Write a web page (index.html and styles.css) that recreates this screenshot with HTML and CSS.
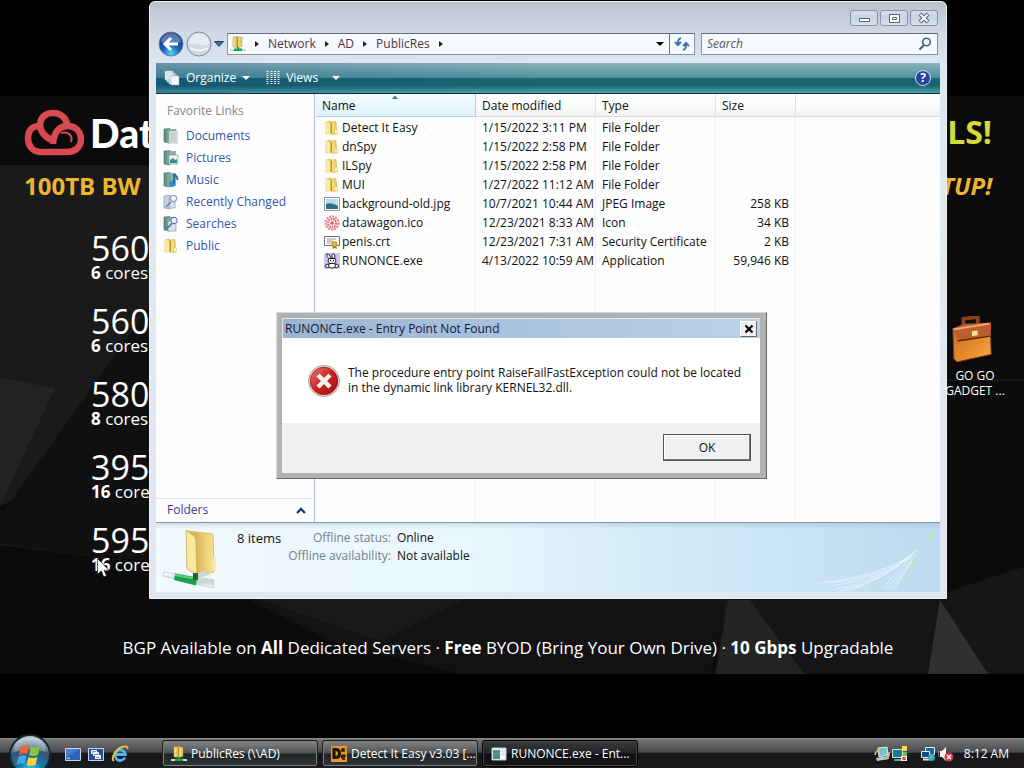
FILE: index.html
```html
<!DOCTYPE html>
<html lang="en">
<head>
<meta charset="utf-8">
<title>PublicRes</title>
<link rel="stylesheet" href="styles.css">
</head>
<body>
<svg class="defs" aria-hidden="true">
  <defs>
    <linearGradient id="gold" x1="0" x2="1"><stop offset="0" stop-color="#fbeeb0"/><stop offset=".4" stop-color="#d9bb45"/><stop offset=".55" stop-color="#f3df86"/><stop offset="1" stop-color="#dcc25a"/></linearGradient>
    <linearGradient id="goldBig" x1="0" x2="1"><stop offset="0" stop-color="#e0be5e"/><stop offset=".3" stop-color="#d5b351"/><stop offset="1" stop-color="#fbe595"/></linearGradient>
    <linearGradient id="green" x1="0" x2="1"><stop offset="0" stop-color="#4f8578"/><stop offset="1" stop-color="#8fb8aa"/></linearGradient>
    <linearGradient id="pipe" x1="0" y1="0" x2="0" y2="1"><stop offset="0" stop-color="#fff"/><stop offset=".6" stop-color="#c3d3d3"/><stop offset="1" stop-color="#f8ffff"/></linearGradient>
    <radialGradient id="blue" cx=".5" cy=".9" r=".8"><stop offset="0" stop-color="#4fd8ff"/><stop offset=".45" stop-color="#1c63bd"/><stop offset="1" stop-color="#15357e"/></radialGradient>
    <radialGradient id="orb" cx=".5" cy=".95" r=".85"><stop offset="0" stop-color="#42e0ff"/><stop offset=".4" stop-color="#1674a8"/><stop offset=".75" stop-color="#39546d"/><stop offset="1" stop-color="#a9bccb"/></radialGradient>
    <linearGradient id="red" x1="0" y1="0" x2="1" y2="1"><stop offset="0" stop-color="#ea7a76"/><stop offset=".5" stop-color="#cf2020"/><stop offset="1" stop-color="#a01010"/></linearGradient>
    <linearGradient id="leather" x1="0" y1="0" x2="1" y2="1"><stop offset="0" stop-color="#c96a2a"/><stop offset=".6" stop-color="#e88c2c"/><stop offset="1" stop-color="#f7b04a"/></linearGradient>
    <symbol id="folder" viewBox="0 0 16 16"><path d="M2 2l4-1 1 1 5-.5.6 8.500.9.4V14l-5 .5-1.500-.8L2 14z" fill="url(#gold)" stroke="#c9aa3f" stroke-width=".5"/><path d="M2 2l4 1.200v11L2 13.500z" fill="#f8eaa4"/><path d="M7.500 3v11" stroke="#b99628"/><path d="M11 10h2.500v3.500H11z" fill="#fff3b0"/></symbol>
    <symbol id="netfolder" viewBox="0 0 16 16"><path d="M3 1l4-.5 5 1v9l-4 .8L3 11z" fill="url(#gold)" stroke="#b89a35" stroke-width=".5"/><path d="M7.500 1v10" stroke="#b69120"/><path d="M0 13h16v2H0z" fill="#c6dcd6"/><path d="M4 12.500h8V15H4zM7 11h2v3H7z" fill="#16a34b"/></symbol>
    <symbol id="bookbase" viewBox="0 0 16 16"><path d="M1 1l6-.5V15l-6-1z" fill="url(#green)" stroke="#47766b" stroke-width=".6"/><path d="M7 1h6v13H7z" fill="#8caea8"/></symbol>
  </defs>
</svg>

<main class="desktop">
  <section class="wallpaper">
    <svg class="facets" viewBox="0 0 1024 578" preserveAspectRatio="none" aria-hidden="true">
      <path d="M0 0h1024v578H0z" fill="#0b0b0b"/>
      <path d="M0 70h200v250L0 410z" fill="#1a1a1a"/>
      <path d="M0 282l55 10L0 410z" fill="#232323"/>
      <path d="M150 210L0 420v30l150 15z" fill="#101010"/>
      <path d="M0 448l150 20" stroke="#1a1a1a"/>
      <path d="M240 500l90 45 130 33h250l20-78z" fill="#121212"/>
      <path d="M250 500l130 45 90-45z" fill="#191919"/>
      <path d="M725 504h220v74H715z" fill="#151515"/>
      <path d="M728 504h22l54 74h-88z" fill="#242424"/>
      <path d="M947 496l77-25v107H930z" fill="#161616"/>
      <path d="M940 504l48 74h-60z" fill="#303030"/>
      <path d="M0 70h150M945 284h79" stroke="#202020"/>
    </svg>
    <div class="promo">
      <div class="promo-left">
        <div class="brand">
          <svg class="cloud" viewBox="0 0 60 48" fill="none" stroke="#d94a50" stroke-width="6.500" aria-hidden="true"><path d="M28 31C11 24 13 4 29 4c8 0 13 5 14 11"/><path d="M15 17C7 17 4 23 4 29c0 8 5 14 12 14h27c8 0 14-5 14-13 0-8-6-13-13-13-9 0-14 6-15 18"/><path d="M37 24c8-2 12 3 10 9" stroke-width="2"/></svg>
          <span>Dat</span>
        </div>
        <p class="bw">100TB BW</p>
      </div>
      <div class="promo-right"><p class="deal">LS!</p><p class="setup">TUP!</p></div>
    </div>
    <ul class="cpus">
      <li><span class="model">560</span><span class="cores"><b>6</b> cores</span></li>
      <li><span class="model">560</span><span class="cores"><b>6</b> cores</span></li>
      <li><span class="model">580</span><span class="cores"><b>8</b> cores</span></li>
      <li><span class="model">395</span><span class="cores"><b>16</b> core</span></li>
      <li><span class="model">595</span><span class="cores"><b>16</b> core</span></li>
    </ul>
    <p class="tagline">BGP Available on <b>All</b> Dedicated Servers · <b>Free</b> BYOD (Bring Your Own Drive) · <b>10 Gbps</b> Upgradable</p>
  </section>

  <a class="shortcut" href="#">
    <svg viewBox="0 0 44 48" aria-hidden="true"><path d="M13 9V3l15-2v9" fill="none" stroke="#8c4020" stroke-width="4"/><path d="M2 13l39-6 1 33-36 8L3 44z" fill="url(#leather)" stroke="#7d3e12"/><path d="M2 13l12-5 28-1-1 14-34 5z" fill="#b95f30"/><path d="M3 14l37-6" stroke="#f0ad76" stroke-width="2"/><path d="M7 26l34-5" stroke="#5a2608" stroke-width="1.500"/><path d="M22 16l6-1v5l-6 1z" fill="#ffe08a"/></svg>
    <span>GO GO<br>GADGET ...</span>
  </a>

  <section class="explorer">
    <header class="caption">
      <button aria-label="Minimize"><svg viewBox="0 0 26 14"><path d="M8.500 7.500h10v3h-10z" fill="#fff" stroke="#56677c"/></svg></button>
      <button aria-label="Maximize"><svg viewBox="0 0 26 14"><path d="M8.500 3.500h10v8h-10z" fill="#fff" stroke="#56677c"/><path d="M11.500 6.500h4v2h-4z" fill="#fff" stroke="#56677c"/></svg></button>
      <button aria-label="Close"><svg viewBox="0 0 26 14"><path d="M9 3l8 8M17 3l-8 8" stroke="#56677c" stroke-width="4"/><path d="M9.500 3.500l7 7M16.500 3.500l-7 7" stroke="#fff" stroke-width="1.800"/></svg></button>
    </header>
    <nav class="navbar">
      <div class="travel">
        <button aria-label="Back"><svg viewBox="0 0 26 26"><circle cx="13" cy="13" r="12" fill="url(#blue)" stroke="#6c7f97"/><path d="M3 11a10 9 0 0 1 20 0q-10 3-20 0" fill="#a9c4e6" opacity=".45"/><path d="M20 13H8m5-6l-6 6 6 6" fill="none" stroke="#fff" stroke-width="3"/></svg></button>
        <button aria-label="Forward"><svg viewBox="0 0 26 26"><circle cx="13" cy="13" r="12" fill="#cfd9e4" stroke="#7e8b9a"/><path d="M2.500 13a10.500 10.500 0 0 1 21 0q-4 3-9 1t-12-1" fill="#e6ecf2"/><path d="M4 17q9 5 18 0" stroke="#f5f9fc" fill="none" stroke-width="2"/></svg></button>
        <button class="recent" aria-label="Recent pages"><svg viewBox="0 0 10 6"><path d="M.5.5h9L5 5.500z" fill="#3579a0" stroke="#1e3d5c"/></svg></button>
      </div>
      <div class="address">
        <svg class="i16" aria-hidden="true"><use href="#netfolder"/></svg>
        <i class="arrow"></i><a href="#">Network</a><i class="arrow"></i><a href="#">AD</a><i class="arrow"></i><a href="#">PublicRes</a><i class="arrow"></i>
        <button class="drop" aria-label="Previous locations"><i class="tri"></i></button>
        <button class="refresh" aria-label="Refresh"><svg viewBox="0 0 16 16" fill="none" stroke="#3d72b5" stroke-width="2"><path d="M7 2C4 3 4 5 4 8M1 6l3 3 3-3"/><path d="M9 14c3-1 3-3 3-6M9 10l3-3 3 3"/></svg></button>
      </div>
      <div class="search">
        <input type="text" placeholder="Search" aria-label="Search">
        <svg viewBox="0 0 14 14" aria-hidden="true"><circle cx="8.500" cy="5" r="3.800" fill="#f4faff" stroke="#41627f" stroke-width="1.600"/><path d="M6 8l-4.500 4.500" stroke="#41627f" stroke-width="2.200"/></svg>
      </div>
    </nav>
    <div class="toolbar">
      <button class="organize"><svg class="i16" viewBox="0 0 16 16" aria-hidden="true" fill="#f4f8fa" stroke="#9fb8c4" stroke-width=".6"><path d="M1 1h8v9H1zM3 3h8v9H3zM5 5h8v9H5z"/><path d="M7 6h8v9H7z"/></svg>Organize<i class="tri"></i></button>
      <button class="views"><svg viewBox="0 0 14 14" aria-hidden="true"><path d="M1.500 0v14M5.500 0v14M9 0v14M12.500 0v14" stroke="#e9f4f6" stroke-width="2" stroke-dasharray="1 1"/></svg>Views<i class="tri"></i></button>
      <button class="help" aria-label="Help">?</button>
    </div>
    <div class="body">
      <aside class="side">
        <h2>Favorite Links</h2>
        <a href="#"><svg class="i16" viewBox="0 0 16 16"><use href="#bookbase"/><path d="M6 3h8v12H6z" fill="#f2f6f5" stroke="#8b9b99" stroke-width=".6"/><path d="M7 5h6M7 7h6M7 9h6M7 11h6M7 13h6" stroke="#76918c" stroke-width=".7"/></svg>Documents</a>
        <a href="#"><svg class="i16" viewBox="0 0 16 16"><use href="#bookbase"/><path d="M6 5h9v9H6z" fill="#e4f4f7" stroke="#6d969e" stroke-width=".6"/><path d="M7 10l3-2 2 2 2-1v4H7z" fill="#3e8a93"/></svg>Pictures</a>
        <a href="#"><svg class="i16" viewBox="0 0 16 16"><use href="#bookbase"/><circle cx="9" cy="12" r="3" fill="#2e93d3"/><path d="M11 12V3q3 0 3.500 5" fill="none" stroke="#1b6db1" stroke-width="1.800"/></svg>Music</a>
        <a href="#"><svg class="i16" viewBox="0 0 16 16"><path d="M1 2l6-1v14l-6-1z" fill="#c6d0df" stroke="#8793aa" stroke-width=".6"/><path d="M6 5h6v9H6z" fill="#dce3ee" stroke="#7d8cab" stroke-width=".6"/><circle cx="10.500" cy="4.500" r="3.200" fill="#eef3fb" stroke="#7385ac"/><path d="M8 8l-5 5" stroke="#6779a5" stroke-width="1.500"/></svg>Recently Changed</a>
        <a href="#"><svg class="i16" viewBox="0 0 16 16"><use href="#bookbase"/><path d="M5 5h8v10H5z" fill="#d5e0ec" stroke="#76899d" stroke-width=".6"/><circle cx="11" cy="4.500" r="3.200" fill="#e6f1fb" stroke="#53729c"/><path d="M9 7.500l-5 5" stroke="#466590" stroke-width="1.500"/></svg>Searches</a>
        <a href="#"><svg class="i16"><use href="#folder"/></svg>Public</a>
        <button class="folders">Folders<svg viewBox="0 0 10 7" aria-hidden="true"><path d="M1 6l4-4 4 4" fill="none" stroke="#1d3a78" stroke-width="2.400"/></svg></button>
      </aside>
      <div class="files">
        <table>
          <colgroup><col class="c-name"><col class="c-mid"><col class="c-mid"><col class="c-size"><col></colgroup>
          <thead><tr><th class="sorted"><svg class="sort" viewBox="0 0 6 4" aria-hidden="true"><path d="M0 4l3-3.500L6 4z" fill="#50708a"/></svg>Name</th><th>Date modified</th><th>Type</th><th>Size</th><th></th></tr></thead>
          <tbody>
            <tr><td><span class="file"><svg class="i16"><use href="#folder"/></svg>Detect It Easy</span></td><td>1/15/2022 3:11 PM</td><td>File Folder</td><td></td><td></td></tr>
            <tr><td><span class="file"><svg class="i16"><use href="#folder"/></svg>dnSpy</span></td><td>1/15/2022 2:58 PM</td><td>File Folder</td><td></td><td></td></tr>
            <tr><td><span class="file"><svg class="i16"><use href="#folder"/></svg>ILSpy</span></td><td>1/15/2022 2:58 PM</td><td>File Folder</td><td></td><td></td></tr>
            <tr><td><span class="file"><svg class="i16"><use href="#folder"/></svg>MUI</span></td><td>1/27/2022 11:12 AM</td><td>File Folder</td><td></td><td></td></tr>
            <tr><td><span class="file"><svg class="i16" viewBox="0 0 16 16"><path d="M.5 1.500h15v13H.5z" fill="#fff" stroke="#8b98a0"/><path d="M2 3h12v10H2z" fill="#b9dcf0"/><path d="M2 8q6-2 12 2v3H2z" fill="#2f6f84"/></svg>background-old.jpg</span></td><td>10/7/2021 10:44 AM</td><td>JPEG Image</td><td>258 KB</td><td></td></tr>
            <tr><td><span class="file"><svg class="i16" viewBox="0 0 16 16" fill="none" stroke="#dc8f97"><circle cx="8" cy="8" r="6.500" stroke-width="2.400" stroke-dasharray="2 1"/><circle cx="8" cy="8" r="4" stroke="#d8727e" stroke-width="2.200" stroke-dasharray="1.700 .7"/><circle cx="8" cy="8" r="1.500" fill="#c94c5a"/></svg>datawagon.ico</span></td><td>12/23/2021 8:33 AM</td><td>Icon</td><td>34 KB</td><td></td></tr>
            <tr><td><span class="file"><svg class="i16" viewBox="0 0 16 16"><path d="M.5 2.500h15v9H.5z" fill="#fff" stroke="#6f6f68"/><path d="M3 5h9M3 7h6M3 9h5" stroke="#9a9a94"/><path d="M9 11l-1 4 2.500-1 2.500 1-1-4" fill="#a5801c"/><circle cx="10.500" cy="10" r="2.600" fill="#e5b832" stroke="#98751b" stroke-width=".6"/></svg>penis.crt</span></td><td>12/23/2021 7:31 AM</td><td>Security Certificate</td><td>2 KB</td><td></td></tr>
            <tr><td><span class="file"><svg class="i16" viewBox="0 0 16 16"><path d="M0 0h16v16H0z" fill="#c9c8ee"/><g fill="#fff" stroke="#111" stroke-width=".9"><path d="M5.500 6L3 3.500V.8l1.600.2 2.600 4zM8 5V1.500L9.500.5 10.800 2v3.500z"/><path d="M5 11l-3 .5-1 2 2.500 1L6 14zM11 11l3 .5 1 2-2.500 1L10 14z"/><path d="M6 9.500h4.500l1 3.500-2 2h-3l-2-2z"/><path d="M5 5.500h6l1 2.500-1.500 2.500h-5L4 8z"/></g><path d="M6.500 6.800v1.400M9.500 6.800v1.400M7.500 9h1" stroke="#111"/></svg>RUNONCE.exe</span></td><td>4/13/2022 10:59 AM</td><td>Application</td><td>59,946 KB</td><td></td></tr>
            <tr class="filler"><td></td><td></td><td></td><td></td><td></td></tr>
          </tbody>
        </table>
      </div>
    </div>
    <footer class="details">
      <svg class="bigfolder" viewBox="0 0 56 62" aria-hidden="true"><path d="M25 2l26 3 1 38-17 3-10-7z" fill="url(#goldBig)" stroke="#d9bd69"/><path d="M24 1l8 6c2 2 2 4 2 8l1 31-10-6z" fill="#f9e7a2" stroke="#c6a54c" stroke-width=".7"/><path d="M51 28l3 1v11l-3 1z" fill="#f7e7aa"/><path d="M33 45l8-3 8 3-12 4z" fill="#cdd5d6"/><path d="M2 43l50 8-1 8L1 47z" fill="url(#pipe)" stroke="#b4c3c4" stroke-width=".7"/><path d="M13 44.500l22 4-1 8-22-5.500z" fill="#18a24a"/><path d="M13 45l22 4v2l-22-4z" fill="#65d083"/><path d="M31 44h5v7h-5z" fill="#126e35"/></svg>
      <p class="count">8 items</p>
      <dl><dt>Offline status:</dt><dd>Online</dd><dt>Offline availability:</dt><dd>Not available</dd></dl>
      <svg class="swoosh" viewBox="0 0 120 66" fill="none" aria-hidden="true"><g stroke="#e6f4fc" stroke-width=".8"><path d="M-6 55q58-5 100-28M10 54q46-3 83-27M12 57q46-5 80-28M16 60q42-5 78-34M20 62q46-9 76-38M24 63q42-10 74-42M64 60l36-40M68 60l30-34M72 61l23-30M76 60l18-28"/></g><path d="M92 38l6-8M110 10l7-6" stroke="#b8eda0" stroke-width="2"/><path d="M98 27l14-16" stroke="#c9e9c4"/></svg>
    </footer>
  </section>

  <section class="dialog" role="dialog" aria-labelledby="dlg-title">
    <header><h1 id="dlg-title">RUNONCE.exe - Entry Point Not Found</h1><button class="x" aria-label="Close"><svg viewBox="0 0 10 10"><path d="M1.500 1.500l7 7M8.500 1.500l-7 7" stroke="#000" stroke-width="2.200"/></svg></button></header>
    <div class="message">
      <svg viewBox="0 0 32 32" aria-hidden="true"><circle cx="16" cy="16" r="15.500" fill="#f4eeec" stroke="#a79b98"/><circle cx="16" cy="16" r="13.800" fill="url(#red)" stroke="#8f1515" stroke-width=".8"/><path d="M10 10l12 12M22 10l-12 12" stroke="#f5f1ee" stroke-width="4.500"/></svg>
      <p>The procedure entry point RaiseFailFastException could not be located<br>in the dynamic link library KERNEL32.dll.</p>
    </div>
    <footer><button class="ok">OK</button></footer>
  </section>

  <svg class="cursor" viewBox="0 0 12 20" aria-hidden="true"><path d="M.5.5v16l3.800-3.600L6.700 19l2.800-1.200-2.500-5.600H12z" fill="#fff" stroke="#111" stroke-width=".7"/></svg>
</main>

<footer class="taskbar">
  <button class="start" aria-label="Start"><svg viewBox="0 0 42 42"><circle cx="21" cy="21" r="20" fill="url(#orb)" stroke="#16262f" stroke-width="2"/><path d="M5 18a16 15 0 0 1 32 0q-16-5-32 0" fill="#dfeaf2" opacity=".35"/><path d="M12 13q4-3 8-1l-2 8q-4-2-8 1z" fill="#f0642b"/><path d="M22 12q4 3 9 0l-2 9q-5 2-9 0z" fill="#8bc540"/><path d="M9.500 23q4-3 8-1l-2 8q-4-2-8 1z" fill="#45a9e8"/><path d="M19.500 23q4 2 9 0l-2 8q-5 2-9 0z" fill="#fcd03c"/></svg></button>
  <div class="quick">
    <a href="#" aria-label="Show desktop"><svg viewBox="0 0 16 16"><path d="M.5 2.500h15v12H.5z" fill="#2e62bd" stroke="#c7d5e6"/><path d="M1 3h14L1 11z" fill="#4c7dcc"/><path d="M2 11.500h3v1.500H2z" fill="#a9d2ad"/></svg></a>
    <a href="#" aria-label="Switch windows"><svg viewBox="0 0 16 16"><path d="M.5 2.500h15v12H.5z" fill="#244f93" stroke="#c7d5e6"/><path d="M3.500 4.500h5v3h-5zM5.500 6.500h5v3h-5z" fill="#6f9ee0" stroke="#fff"/><path d="M7 9h6v4H7z" fill="#fff"/><path d="M8 11h4v1H8z" fill="#6f9ee0"/></svg></a>
    <a href="#" aria-label="Internet Explorer"><svg viewBox="0 0 18 18" fill="none"><path d="M14 12.500A5.300 5.300 0 1 1 14.500 9.500H5" stroke="#52b6ee" stroke-width="2.800"/><path d="M3 16C-1 14 5 4 11 2q6-2 5.500 2" stroke="#f3bd3d" stroke-width="1.900"/></svg></a>
  </div>
  <div class="tasks">
    <button><svg class="i16" aria-hidden="true"><use href="#netfolder"/></svg><span>PublicRes (\\AD)</span></button>
    <button><svg class="i16" viewBox="0 0 16 16" aria-hidden="true"><path d="M0 0h16v16H0z" fill="#e8962d"/><path d="M1.500 2h3.500q5 0 5 5.500T5 13H1.500zM4.500 5v5q2.500 0 2.500-2.500T4.500 5z" fill="#1d1307" fill-rule="evenodd"/><path d="M11 3h2v2h-2zM14 11h-3.500q0-2 2-2t1.500 2M11 11q0 3 3 2" fill="none" stroke="#1d1307" stroke-width="1.400"/></svg><span>Detect It Easy v3.03 [...</span></button>
    <button class="active"><svg class="i16" viewBox="0 0 16 16" aria-hidden="true"><path d="M1 2h14v12H1z" fill="#f4f8f8" stroke="#bccaca"/><path d="M2 4h7v9H2z" fill="#4e9188"/><path d="M10 4h4v6h-4z" fill="#dce8ea"/></svg><span>RUNONCE.exe - Ent...</span></button>
  </div>
  <div class="tray">
    <svg viewBox="0 0 16 16" aria-hidden="true"><path d="M4 2l9-1 1 8-9 2z" fill="#76c4cf" stroke="#e3f0ee"/><path d="M2 12l12-2 1 3-12 2z" fill="#b9cbd0"/><path d="M1 9Q2 4 6 4M15 6q1 5-4 7" fill="none" stroke="#e2bd62" stroke-width="1.700"/></svg>
    <svg viewBox="0 0 16 16" aria-hidden="true"><path d="M.5 3.500h10v8H.5z" fill="#167f86" stroke="#cfe5e1"/><path d="M2 13h8v2H2z" fill="#5aaa91"/><path d="M10 0h5v5h-5z" fill="#f3df46"/><path d="M11 6h4v4h-4z" fill="#63bc4a"/><path d="M9 10h6v5H9z" fill="#fff"/><path d="M10.500 11l3 3M13.500 11l-3 3" stroke="#d23320" stroke-width="1.300"/></svg>
    <svg class="gap" viewBox="0 0 16 16" aria-hidden="true"><path d="M5.500 1.500h9v7h-9z" fill="#1c65ad" stroke="#e1edf4"/><path d="M1.500 5.500h8v6h-8z" fill="#164c87" stroke="#e1edf4"/><path d="M3 13.500h6" stroke="#e1edf4" stroke-width="2"/><circle cx="11.500" cy="11.500" r="3.500" fill="#359ed7"/><path d="M10 9l3 1-1 4-2-2z" fill="#65bd58"/></svg>
    <svg viewBox="0 0 16 16" aria-hidden="true"><path d="M2 5h2l4-4v14l-4-4H2z" fill="#f2f5f6"/><path d="M0 5v6" stroke="#d5dddf"/><circle cx="11" cy="11" r="4.500" fill="#dc3534"/><path d="M9 9l4 4M13 9l-4 4" stroke="#fff" stroke-width="1.600"/></svg>
    <time>8:12 AM</time>
  </div>
</footer>
</body>
</html>
```
FILE: styles.css
```css
* { box-sizing: border-box; }
body {
  margin: 0;
  min-height: 100vh;
  display: flex;
  flex-direction: column;
  background: #000;
  color: #111;
  font: 12px/16px "Open Sans", "Noto Sans", sans-serif;
  overflow: hidden;
}
h1, h2, p, ul, dl, dd { margin: 0; padding: 0; font-weight: 400; }
h1, h2 { font-size: 12px; }
a { text-decoration: none; color: inherit; }
button { font: inherit; color: inherit; border: 0; padding: 0; background: none; }
svg { display: block; flex: none; }
.defs { position: absolute; width: 0; height: 0; }
.i16 { width: 16px; height: 16px; }
.tri { border: 4px solid transparent; border-top-color: currentColor; border-bottom: 0; }

.desktop { position: relative; flex: 1; padding-top: 96px; display: flex; flex-direction: column; }

/* wallpaper */
.wallpaper { position: relative; height: 578px; color: #fff; }
.facets { position: absolute; inset: 0; width: 100%; height: 100%; z-index: -1; }
.promo { display: flex; justify-content: space-between; padding: 6px 32px 0 24px; }
.brand { display: flex; align-items: center; gap: 6px; height: 62px; font: 900 39px/50px Lato, sans-serif; }
.cloud { width: 60px; height: 48px; }
.bw, .setup { font-size: 24px; line-height: 44px; font-weight: 700; color: #efb52c; }
.setup { font-style: italic; }
.promo-right { text-align: right; }
.deal { font-size: 32px; line-height: 60px; padding-bottom: 2px; font-weight: 700; color: #d3db35; }
.cpus { list-style: none; padding: 20px 0 0 91px; }
.cpus li { display: flex; flex-direction: column; height: 73px; }
.model { font-size: 34px; line-height: 40px; }
.cores { font-size: 17px; line-height: 10px; }
.tagline { position: relative; text-align: center; padding: 43px 8px 0 0; font-size: 17px; line-height: 24px; }

.shortcut { position: absolute; top: 316px; right: 8px; width: 82px; color: #fff; text-align: center; line-height: 15px; }
.shortcut svg { width: 44px; height: 46px; margin: 0 auto 6px 16px; }

/* explorer window */
.explorer {
  position: absolute; top: 1px; left: 149px; right: 77px; bottom: 139px;
  display: flex; flex-direction: column;
  padding: 0 6px 6px;
  border: 1px solid #eef3f8;
  border-radius: 6px 6px 0 0;
  background: linear-gradient(#b9c3ce, #ced9e5 30px, #dce7f3 62px, #dfe9ef 200px, #e1e6f3);
}
.caption { display: flex; justify-content: flex-end; gap: 2px; height: 31px; padding: 8px 2px 7px 0; }
.caption button { width: 28px; border: 1px solid #8593a5; border-radius: 3px; background: linear-gradient(#d5dfe9, #c7d3df 50%, #d7e3ee); }
.navbar { display: flex; align-items: center; gap: 6px; height: 22px; padding: 0 2px; }
.travel { display: flex; align-items: center; gap: 2px; height: 26px; width: 64px; }
.travel svg { width: 26px; height: 26px; }
.travel .recent svg { width: 10px; height: 6px; }
.address, .search { display: flex; align-items: center; height: 22px; border: 1px solid #8493a8; border-top-color: #5e6d80; background: #f6faff; }
.address { flex: 1; color: #46363f; padding-left: 2px; }
.address .i16 { margin-right: 9px; }
.arrow { border: 3px solid transparent; border-left: 4px solid #222; border-right: 0; margin: 0 9px; }
.arrow:first-of-type { margin-left: 0; }
.address .drop { display: flex; align-items: center; margin-left: auto; padding: 0 5px; color: #000; }
.refresh { display: grid; place-items: center; align-self: stretch; width: 25px; border-left: 1px solid #65758a; }
.refresh svg { width: 16px; height: 16px; }
.navbar > .address { margin-left: -1px; }
.search { width: 237px; padding: 0 5px; }
.search input { flex: 1; min-width: 0; padding: 0; border: 0; background: none; font: inherit; outline: 0; }
.search input::placeholder { font-style: italic; color: #55585e; }
.search svg { width: 14px; height: 14px; }
.toolbar {
  display: flex; align-items: center; gap: 16px; height: 31px; margin-top: 8px; padding: 0 10px 0 8px;
  border-bottom: 1px solid #12303b; color: #fff;
  background: linear-gradient(90deg, #0a3a7040, transparent 50%), linear-gradient(#8ab4bd, #4f929c 48%, #1d6474 52%, #17646f 75%, #4fa4ab);
}
.toolbar button { display: flex; align-items: center; gap: 6px; }
.views svg { width: 14px; height: 14px; }
.views .tri { margin-left: 8px; }
.toolbar .help { margin-left: auto; width: 14px; height: 14px; border-radius: 50%; background: #2b409f; justify-content: center; font-weight: 700; outline: 1px solid #cad6e9; }

.body { flex: 1; min-height: 0; display: flex; background: #fdfdfd; }
.side { width: 159px; padding: 7px 0 0 7px; border-right: 1px solid #aebccd; display: flex; flex-direction: column; color: #3454ae; }
.side h2 { padding: 2px 4px 6px; line-height: 16px; color: #87878a; }
.side a { display: flex; align-items: center; gap: 7px; height: 22px; }
.folders { display: flex; justify-content: space-between; align-items: center; margin: auto 1px 0 -7px; padding: 0 7px 1px 11px; height: 24px; border-top: 1px solid #dfe6ec; color: #40389c; }
.folders svg { width: 10px; height: 7px; }
.files { flex: 1; min-width: 0; padding-left: 1px; }
.files table { width: 100%; height: 100%; border-collapse: separate; border-spacing: 0; table-layout: fixed; }
.c-name { width: 160px; }
.c-mid { width: 120px; }
.c-size { width: 80px; }
th { position: relative; height: 23px; padding: 2px 6px 0; text-align: left; font-weight: 400; background: linear-gradient(#fff, #fcfcfc 55%, #f1f2f3); border-bottom: 1px solid #d8dcdf; border-right: 1px solid #dfe3e6; }
th.sorted { background: linear-gradient(#f3fbfe, #def2fb); border-color: #a6d3e6; }
.sort { position: absolute; top: 1px; left: 50%; width: 6px; height: 4px; margin-left: -4px; }
th:last-child, td:last-child { border-right: 0; }
td { height: 19px; padding: 0 6px; line-height: 19px; white-space: nowrap; border-right: 1px solid #f0f0f2; }
td:nth-child(4) { text-align: right; }
tbody tr:first-child td { height: 20px; padding-top: 1px; }
.filler td { height: auto; }
.file { display: flex; align-items: center; gap: 2px; margin-left: 2px; }

.details {
  display: flex; height: 70px; padding: 6px 2px 0 6px; border-top: 1px solid #7f97a8;
  background: linear-gradient(#8aa4b84d, transparent 6px), linear-gradient(90deg, #f0f9fe, #e8f7fd 40%, #cfe9f6 70%, #bedaf0);
}
.bigfolder { width: 56px; height: 62px; }
.count { padding-left: 19px; line-height: 18px; font-size: 13px; }
.details dl { display: grid; grid-template-columns: auto auto; column-gap: 6px; align-content: start; margin-left: 7px; line-height: 18px; }
dt { text-align: right; color: #76808a; }
.swoosh { width: 120px; height: 66px; margin-left: auto; }

/* error dialog */
.dialog { position: absolute; left: 276px; top: 312px; width: 491px; padding: 5px 6px 5px 5px; border: 1px solid #d8d8d8; border-right-color: #666; border-bottom-color: #666; background: #b1b1b1; }
.dialog header { display: flex; align-items: center; justify-content: space-between; height: 20px; padding: 0 3px 0 2px; background: linear-gradient(90deg, #9bb4d1, #bad2ea); border: 1px solid #e1e6eb; border-bottom: 0; border-right: 0; color: #16163a; }
.x { display: grid; place-items: center; width: 17px; height: 16px; background: #f0f0f0; border: 1px solid #fff; border-right-color: #666; border-bottom-color: #666; }
.x svg { width: 10px; height: 10px; }
.message { display: flex; gap: 8px; height: 85px; padding: 27px 26px 0; background: #fff; }
.message svg { width: 32px; height: 32px; }
.message p { line-height: 15px; white-space: nowrap; }
.dialog footer { display: flex; justify-content: flex-end; height: 50px; padding: 11px 9px 0; background: #f0f0f0; }
.ok { width: 88px; height: 27px; border: 1px solid #555; box-shadow: inset -1px -1px #777, inset 1px 1px #fff; background: #f0f0f0; }
.cursor { position: absolute; left: 97px; top: 558px; width: 12px; height: 20px; }

/* taskbar */
.taskbar { position: relative; display: flex; align-items: center; height: 30px; color: #fff; border-top: 1px solid #8a8a8a; background: linear-gradient(#747474, #484a4b 45%, #151718 50%, #191b1c); }
.start { align-self: flex-start; width: 42px; height: 30px; margin-left: 9px; }
.start svg { position: absolute; top: -5px; width: 42px; height: 42px; }
.quick { display: flex; align-items: center; gap: 7px; width: 111px; padding-left: 14px; }
.quick svg { width: 16px; height: 16px; }
.quick a:last-child svg { width: 18px; height: 18px; }
.tasks { display: flex; gap: 4px; flex: 1; }
.tasks button { display: flex; align-items: center; gap: 4px; width: 156px; height: 27px; padding: 0 8px; white-space: nowrap; border: 1px solid #1c1c1c; border-radius: 3px; box-shadow: inset 0 0 0 1px #7d7d7d; background: linear-gradient(#858585, #4f5253 48%, #202324 52%, #323537); }
.tasks .active { box-shadow: inset 0 0 0 1px #444; background: linear-gradient(#383a3b, #222425 48%, #0d0f10 52%, #17191a); border-color: #000; }
.tray { display: flex; align-items: center; gap: 2px; padding-right: 15px; }
.tray svg { width: 16px; height: 16px; }
.tray .gap { margin-left: 10px; }
.tray time { margin-left: 8px; }
```
